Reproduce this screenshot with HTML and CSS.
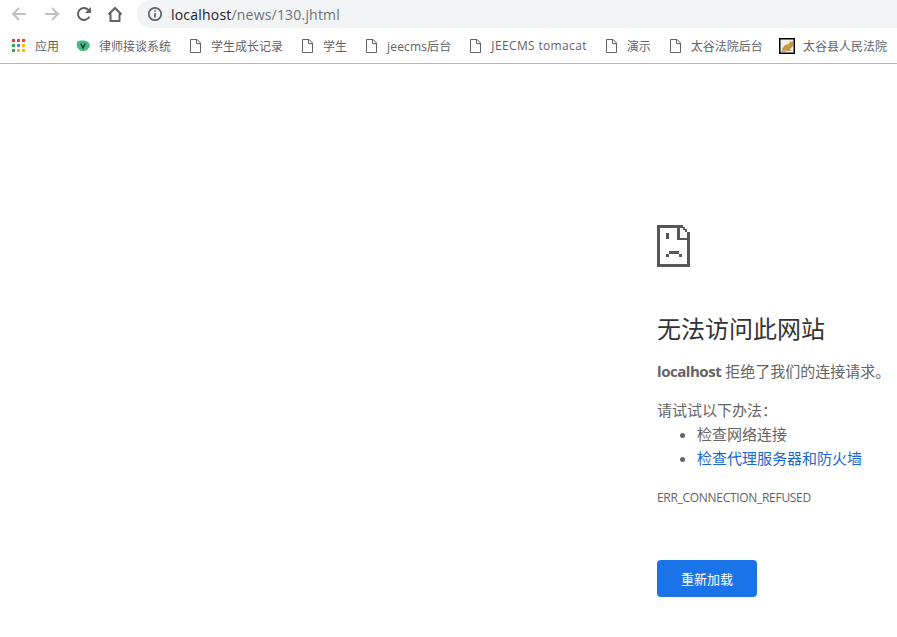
FILE: index.html
```html
<!DOCTYPE html>
<html lang="zh-CN">
<head>
    <meta charset="UTF-8">
    <title>localhost</title>
    <link rel="stylesheet" href="styles.css">
</head>
<body>
    <div class="toolbar">
        <svg class="nav-icon back" width="16" height="16" viewBox="0 0 16 16"><path d="M15 8H2M8 2L2 8l6 6"/></svg>
        <svg class="nav-icon forward" width="16" height="16" viewBox="0 0 16 16"><path d="M1 8h13M8 2l6 6-6 6"/></svg>
        <svg class="nav-icon reload" width="16" height="16" viewBox="0 0 16 16"><path d="M13.400 10.600A6 6 0 1 1 12.300 3.800L14 5.600"/><path class="solid" d="M15 1v6H9z"/></svg>
        <svg class="nav-icon home" width="16" height="16" viewBox="0 0 16 16"><path d="M1.500 8.500L8 2l6.500 6.500M3.500 7.500V15h9V7.500"/></svg>
        <div class="omnibox">
            <svg class="info-icon" width="14" height="14" viewBox="0 0 14 14"><circle cx="7" cy="7" r="6.200"/><path d="M7 6v4.500M7 3.200v1.600"/></svg>
            <span class="url"><span class="host">localhost</span>/news/130.jhtml</span>
        </div>
    </div>

    <div class="bookmarks">
        <div class="bookmark">
            <div class="apps-grid">
                <i class="red"></i><i class="red"></i><i class="red"></i>
                <i class="green"></i><i class="blue"></i><i class="orange"></i>
                <i class="green"></i><i class="orange"></i><i class="orange"></i>
            </div>
            应用
        </div>
        <div class="bookmark lawyer">
            <svg class="favicon" width="14" height="14" viewBox="0 0 14 14"><path fill="#48b884" d="M1.500 2.500C4 1 10 1 12.500 3.500c2 2 1.500 4.500-.5 6.500-2.500 2.500-6.500 3-9 .5C.5 8.500 0 4.500 1.500 2.500z"/><path fill="none" stroke="#1d3b36" stroke-width="1.400" d="M4.800 4.600L7 9l2.200-4.400"/></svg>
            律师接谈系统
        </div>
        <div class="bookmark"><svg class="file-icon" width="11" height="14" viewBox="0 0 11 14"><path d="M.5.500h6.500l3.500 3.500v9.500H.5zM6.500.500v4h4"/></svg>学生成长记录</div>
        <div class="bookmark"><svg class="file-icon" width="11" height="14" viewBox="0 0 11 14"><path d="M.5.500h6.500l3.500 3.500v9.500H.5zM6.500.500v4h4"/></svg>学生</div>
        <div class="bookmark jeecms"><svg class="file-icon" width="11" height="14" viewBox="0 0 11 14"><path d="M.5.500h6.500l3.500 3.500v9.500H.5zM6.500.500v4h4"/></svg>jeecms后台</div>
        <div class="bookmark wide-latin"><svg class="file-icon" width="11" height="14" viewBox="0 0 11 14"><path d="M.5.500h6.500l3.500 3.500v9.500H.5zM6.500.500v4h4"/></svg>JEECMS tomacat</div>
        <div class="bookmark"><svg class="file-icon" width="11" height="14" viewBox="0 0 11 14"><path d="M.5.500h6.500l3.500 3.500v9.500H.5zM6.500.500v4h4"/></svg>演示</div>
        <div class="bookmark"><svg class="file-icon" width="11" height="14" viewBox="0 0 11 14"><path d="M.5.500h6.500l3.500 3.500v9.500H.5zM6.500.500v4h4"/></svg>太谷法院后台</div>
        <div class="bookmark tomcat">
            <svg class="favicon" width="16" height="16" viewBox="0 0 16 16"><rect x=".75" y=".75" width="14.500" height="14.500" fill="#f4f2e8" stroke="#000" stroke-width="1.500"/><path fill="#b9b9ad" d="M2 13l3-5 4 2-2 4H2z"/><path fill="#c8963e" d="M3 11l3-4 4-1 1-3 1 1 2-1v5l-3 3 1 2H8L7 11l-2 2z"/></svg>
            太谷县人民法院
        </div>
    </div>

    <main class="error-page">
        <svg class="sad-file" width="33" height="42" viewBox="0 0 33 42">
            <path d="M0 0h26v3H3v36h27V7h3v35H0z"/>
            <path d="M26 2h2v3h-2zM28 4h2v3h-2zM20 0h3v13h10v2H20z"/>
            <path d="M9 8h3v6H9zM12 26h10v3H12zM9 29h3v3H9zM22 29h3v3h-3z"/>
        </svg>
        <h1>无法访问此网站</h1>
        <p class="summary"><strong>localhost</strong> 拒绝了我们的连接请求。</p>
        <p class="try-label">请试试以下办法：</p>
        <ul class="suggestions">
            <li>检查网络连接</li>
            <li><a href="#">检查代理服务器和防火墙</a></li>
        </ul>
        <div class="error-code">ERR_CONNECTION_REFUSED</div>
        <button class="reload-button">重新加载</button>
    </main>
</body>
</html>
```

FILE: styles.css
```css
/* Page */
html, body {
    height: 100%;
}

body {
    margin: 0;
    overflow: hidden;
    background: #fff;
    font-family: "Open Sans", "Noto Sans CJK SC", sans-serif;
    color: #646464;
}

/* Top row with the navigation buttons and address bar */
.toolbar {
    display: flex;
    align-items: center;
    height: 28px;
    padding-left: 11px;
}

.nav-icon {
    flex: none;
    fill: none;
    stroke: #5f6368;
    stroke-width: 2;
}

.nav-icon .solid {
    fill: #5f6368;
    stroke: none;
}

.back, .forward {
    stroke: #bdc1c6;
}

.forward {
    margin-left: 17px;
}

.reload {
    margin-left: 16px;
}

.home {
    margin-left: 15px;
}

.omnibox {
    flex: 1;
    display: flex;
    align-items: center;
    height: 28px;
    margin-left: 14px;
    padding-left: 11px;
    background: #f1f3f4;
    border-radius: 14px 0 0 14px;
}

.info-icon {
    fill: none;
    stroke: #5f6368;
    stroke-width: 1.700;
}

.url {
    margin-left: 9px;
    font-size: 14px;
    letter-spacing: .2px;
    color: #6f7378;
}

.host {
    color: #202124;
}

/* Bookmarks bar */
.bookmarks {
    display: flex;
    align-items: center;
    gap: 19px;
    height: 35px;
    padding-left: 12px;
    border-bottom: 1px solid #b8b8b8;
    white-space: nowrap;
}

.bookmark {
    display: flex;
    align-items: center;
    gap: 10px;
    font-size: 12px;
    color: #5f6368;
}

.lawyer {
    gap: 9px;
    margin-left: -2px;
}

.jeecms {
    letter-spacing: .15px;
}

.wide-latin {
    letter-spacing: .35px;
}

.tomcat {
    gap: 8px;
    margin-left: -3px;
}

.apps-grid {
    display: grid;
    grid-template-columns: repeat(3, 3px);
    grid-auto-rows: 3px;
    gap: 2px;
}

.apps-grid .red { background: #ea4335; }
.apps-grid .blue { background: #4285f4; }
.apps-grid .green { background: #34a853; }
.apps-grid .orange { background: #fbbc05; }

.file-icon {
    fill: none;
    stroke: #5f6368;
}

/* Error content */
.error-page {
    padding: 161px 0 0 657px;
    white-space: nowrap;
}

.sad-file {
    display: block;
    fill: #575757;
    shape-rendering: crispEdges;
}

h1 {
    margin: 43px 0 0;
    font-size: 24px;
    font-weight: 400;
    line-height: 38px;
    color: #333;
}

p {
    margin: 0;
    font-size: 15px;
    line-height: 24px;
}

.summary {
    margin-top: 11px;
}

.summary strong {
    letter-spacing: -.45px;
}

.try-label {
    margin-top: 15px;
}

.suggestions {
    margin: 0;
    padding-left: 40px;
    font-size: 15px;
    line-height: 24px;
}

.suggestions a {
    color: #1967d2;
    text-decoration: none;
}

.error-code {
    margin-top: 19px;
    font-size: 12px;
    line-height: 18px;
    letter-spacing: -.3px;
}

.reload-button {
    display: block;
    width: 100px;
    height: 37px;
    margin-top: 53px;
    border: 0;
    border-radius: 4px;
    background: #1a73e8;
    color: #fff;
    font-family: inherit;
    font-size: 13px;
    font-weight: 400;
}
```
